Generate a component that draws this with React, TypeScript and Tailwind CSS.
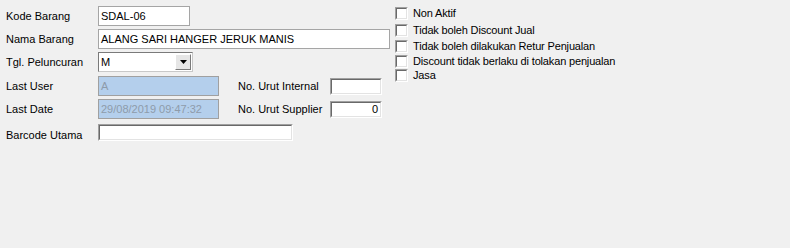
import React from "react";

const font = { fontFamily: '"Liberation Sans", Arial, sans-serif' };

function Check({ label }: { label: string }) {
  return (
    <div className="flex items-center gap-[5px]">
      <span className="block w-[13px] h-[13px] border border-t-[#a0a0a0] border-l-[#a0a0a0] border-r-white border-b-white">
        <span className="block w-full h-full bg-white border border-t-[#696969] border-l-[#696969] border-r-[#e3e3e3] border-b-[#e3e3e3]" />
      </span>
      <span className="tracking-[-0.16px]">{label}</span>
    </div>
  );
}

function Sunken({ className, children }: { className: string; children?: React.ReactNode }) {
  return (
    <div className={"border border-t-[#a0a0a0] border-l-[#a0a0a0] border-r-white border-b-white " + className}>
      <div className="w-full h-full bg-white border border-t-[#696969] border-l-[#696969] border-r-[#e3e3e3] border-b-[#e3e3e3] flex items-center justify-end pr-[2px]">
        {children}
      </div>
    </div>
  );
}

export default function App() {
  return (
    <div className="w-[790px] h-[248px] bg-[#f0f0f0] text-[11px] text-black leading-none flex" style={font}>
      <div className="w-[395px] flex flex-col pt-[6px] pl-[6px]">
        <div className="flex items-center h-[20px]">
          <span className="w-[92px]">Kode Barang</span>
          <div className="w-[92px] h-[20px] bg-white border border-[#a5a5a5] flex items-center pl-[2px]">SDAL-06</div>
        </div>
        <div className="flex items-center h-[20px] mt-[3px]">
          <span className="w-[92px]">Nama Barang</span>
          <div className="w-[292px] h-[20px] bg-white border border-[#a5a5a5] flex items-center pl-[2px]">ALANG SARI HANGER JERUK MANIS</div>
        </div>
        <div className="flex items-center h-[20px] mt-[3px]">
          <span className="w-[92px]">Tgl. Peluncuran</span>
          <div className="w-[95px] h-[20px] bg-white border border-t-[#7a7a7a] border-l-[#7a7a7a] border-r-[#c8c8c8] border-b-[#c8c8c8] flex items-center">
            <span className="flex-1 pl-[2px]">M</span>
            <div className="w-[16px] h-[16px] mr-[1px] bg-[#e6e6e6] border border-t-white border-l-white border-r-[#7a7a7a] border-b-[#7a7a7a] flex items-center justify-center">
              <svg width="7" height="4" viewBox="0 0 7 4"><path d="M0 0H7L3.5 4Z" fill="#000" /></svg>
            </div>
          </div>
        </div>
        <div className="flex items-center h-[20px] mt-[4px]">
          <span className="w-[92px]">Last User</span>
          <div className="w-[121px] h-[20px] bg-[#b4cfec] border border-[#a0a0a0] flex items-center pl-[2px] text-[#8e9baa]">A</div>
          <span className="ml-[19px] w-[92px]">No. Urut Internal</span>
          <Sunken className="w-[52px] h-[17px]" />
        </div>
        <div className="flex items-center h-[20px] mt-[3px]">
          <span className="w-[92px]">Last Date</span>
          <div className="w-[121px] h-[20px] bg-[#b4cfec] border border-[#a0a0a0] flex items-center pl-[2px] text-[#8e9baa]">29/08/2019 09:47:32</div>
          <span className="ml-[19px] w-[92px]">No. Urut Supplier</span>
          <Sunken className="w-[52px] h-[17px] self-start mt-[2px]">0</Sunken>
        </div>
        <div className="flex items-center h-[17px] mt-[5px]">
          <span className="w-[92px] pt-[6px]">Barcode Utama</span>
          <Sunken className="w-[195px] h-[17px]" />
        </div>
      </div>
      <div className="flex flex-col pt-[5px]">
        <div className="h-[17px] flex items-center"><Check label="Non Aktif" /></div>
        <div className="h-[16px] flex items-center"><Check label="Tidak boleh Discount Jual" /></div>
        <div className="h-[16px] flex items-center"><Check label="Tidak boleh dilakukan Retur Penjualan" /></div>
        <div className="h-[15px] flex items-center"><Check label="Discount tidak berlaku di tolakan penjualan" /></div>
        <div className="h-[13px] flex items-center"><Check label="Jasa" /></div>
      </div>
    </div>
  );
}
